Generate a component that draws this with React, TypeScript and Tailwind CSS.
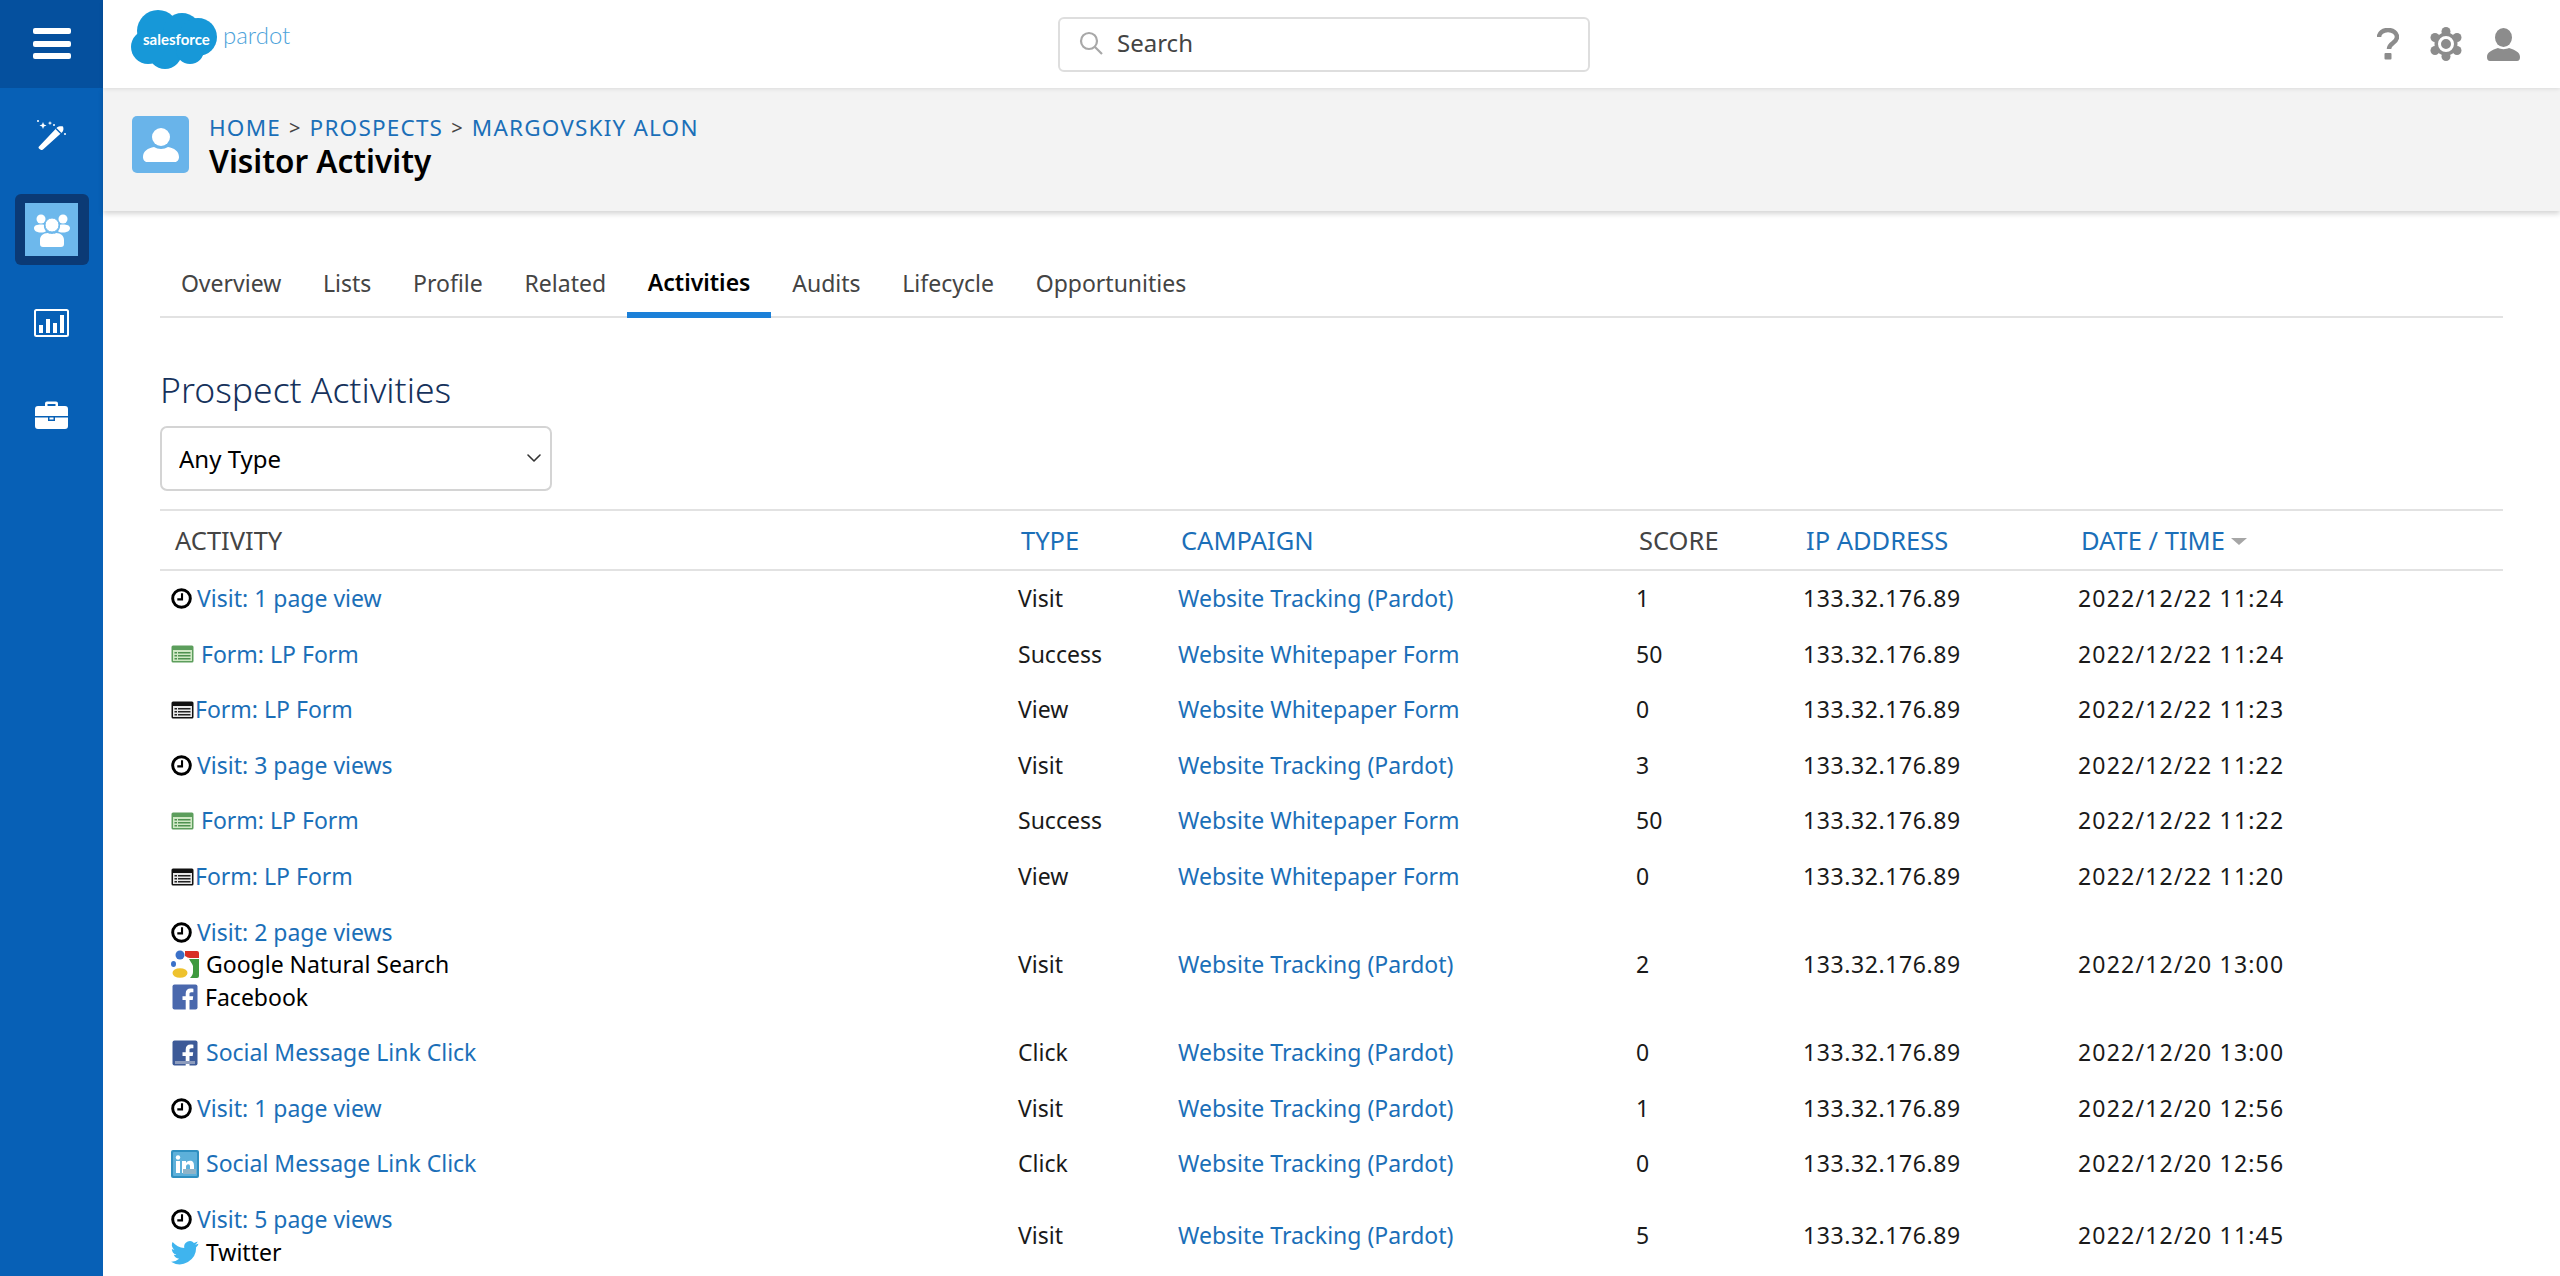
import React from 'react';
import { ChevronDown } from 'lucide-react';

type Icon = 'clock' | 'formGreen' | 'formBlack' | 'social-fb' | 'social-li';

interface Row {
  icon: Icon;
  label: string;
  extras?: { icon: 'google' | 'facebook' | 'twitter'; label: string }[];
  type: string;
  campaign: string;
  score: number;
  date: string;
}

const TRACKING = 'Website Tracking (Pardot)';
const WHITEPAPER = 'Website Whitepaper Form';

const rows: Row[] = [
  { icon: 'clock', label: 'Visit: 1 page view', type: 'Visit', campaign: TRACKING, score: 1, date: '2022/12/22 11:24' },
  { icon: 'formGreen', label: 'Form: LP Form', type: 'Success', campaign: WHITEPAPER, score: 50, date: '2022/12/22 11:24' },
  { icon: 'formBlack', label: 'Form: LP Form', type: 'View', campaign: WHITEPAPER, score: 0, date: '2022/12/22 11:23' },
  { icon: 'clock', label: 'Visit: 3 page views', type: 'Visit', campaign: TRACKING, score: 3, date: '2022/12/22 11:22' },
  { icon: 'formGreen', label: 'Form: LP Form', type: 'Success', campaign: WHITEPAPER, score: 50, date: '2022/12/22 11:22' },
  { icon: 'formBlack', label: 'Form: LP Form', type: 'View', campaign: WHITEPAPER, score: 0, date: '2022/12/22 11:20' },
  {
    icon: 'clock',
    label: 'Visit: 2 page views',
    extras: [
      { icon: 'google', label: 'Google Natural Search' },
      { icon: 'facebook', label: 'Facebook' },
    ],
    type: 'Visit',
    campaign: TRACKING,
    score: 2,
    date: '2022/12/20 13:00',
  },
  { icon: 'social-fb', label: 'Social Message Link Click', type: 'Click', campaign: TRACKING, score: 0, date: '2022/12/20 13:00' },
  { icon: 'clock', label: 'Visit: 1 page view', type: 'Visit', campaign: TRACKING, score: 1, date: '2022/12/20 12:56' },
  { icon: 'social-li', label: 'Social Message Link Click', type: 'Click', campaign: TRACKING, score: 0, date: '2022/12/20 12:56' },
  {
    icon: 'clock',
    label: 'Visit: 5 page views',
    extras: [{ icon: 'twitter', label: 'Twitter' }],
    type: 'Visit',
    campaign: TRACKING,
    score: 5,
    date: '2022/12/20 11:45',
  },
];

const tabs = ['Overview', 'Lists', 'Profile', 'Related', 'Activities', 'Audits', 'Lifecycle', 'Opportunities'];

const COLS = 'grid grid-cols-[858px_160px_458px_167px_275px_1fr]';

const ClockIcon = () => (
  <svg viewBox="0 0 20 20" className="h-[21px] w-[21px] shrink-0">
    <circle cx="10" cy="10" r="8.4" fill="none" stroke="#000" strokeWidth="2.8" />
    <path d="M10.5 5v5.8H6" fill="none" stroke="#000" strokeWidth="2" />
  </svg>
);

const FormIcon = ({ green }: { green?: boolean }) => (
  <svg viewBox="0 0 23 18" className="h-[18px] w-[23px] shrink-0">
    <rect x="0.5" y="0.5" width="22" height="17" rx="1.5" fill={green ? '#5c9e5c' : '#111'} />
    <rect x="2" y="5" width="19" height="11" fill={green ? '#cfe8c4' : '#e8e8e8'} />
    {[7, 10, 13].map((y) => (
      <g key={y}>
        <rect x="3.5" y={y} width="2.5" height="1.5" fill={green ? '#4f9150' : '#222'} />
        <rect x="7" y={y} width="12.5" height="1.5" fill={green ? '#4f9150' : '#222'} />
      </g>
    ))}
  </svg>
);

const FacebookIcon = ({ dark }: { dark?: boolean }) => (
  <svg viewBox="0 0 26 26" className="ml-[1px] h-[26px] w-[26px] shrink-0">
    <rect x="0.5" y="0.5" width="25" height="25" rx="2" fill={dark ? '#3d5a98' : '#4a68ad'} />
    <path d="M17.5 26v-10h3.2l.5-3.8h-3.7V10c0-1.1.4-1.8 1.9-1.8h2V4.8c-.4 0-1.5-.2-2.9-.2-2.9 0-4.8 1.7-4.8 4.9v2.7h-3.2v3.8h3.2v10z" fill="#fff" />
    {dark && <rect x="3" y="21" width="20" height="3" fill="#8d9cbd" />}
  </svg>
);

const LinkedinIcon = () => (
  <svg viewBox="0 0 28 28" className="h-[28px] w-[28px] shrink-0">
    <rect width="28" height="28" rx="2" fill="#2f8fc0" />
    <rect x="2" y="2" width="24" height="24" rx="1" fill="#5db0da" />
    <rect x="5" y="11" width="4" height="12" fill="#fff" />
    <circle cx="7" cy="7.5" r="2.2" fill="#fff" />
    <path d="M11 11h4v2c1-1.5 2.4-2.2 4-2.2 3 0 4 2 4 5V23h-4v-6.5c0-1.5-.6-2.3-1.8-2.3-1.3 0-2.2.9-2.2 2.4V23h-4z" fill="#fff" />
    <rect x="12" y="19" width="13" height="5" fill="#8fb4c8" />
  </svg>
);

const GoogleIcon = () => (
  <svg viewBox="0 0 28 28" className="h-[28px] w-[28px] shrink-0">
    <path d="M14 1h12a2 2 0 0 1 2 2v5h-9c-2 0-3-1-5-2z" fill="#d93025" />
    <path d="M18 9h10v17a2 2 0 0 1-2 2h-7c2-2 3-4 3-6v-6c-1-3-3-5-4-7z" fill="#3f9a3f" />
    <circle cx="9" cy="5" r="4.5" fill="#3a70c8" />
    <ellipse cx="2.5" cy="14" rx="2.5" ry="3" fill="#3a70c8" />
    <ellipse cx="9" cy="23" rx="7.5" ry="4.8" fill="#eec22e" />
  </svg>
);

const TwitterIcon = () => (
  <svg viewBox="0 0 24 24" className="h-[28px] w-[28px] shrink-0">
    <path
      d="M23.5 4.9c-.9.4-1.8.7-2.8.8 1-.6 1.8-1.5 2.1-2.7-.9.6-2 1-3.1 1.2a4.9 4.9 0 0 0-8.3 4.4C7.4 8.4 3.8 6.5 1.4 3.5a4.9 4.9 0 0 0 1.5 6.5c-.8 0-1.5-.2-2.2-.6 0 2.4 1.700 4.400 3.900 4.900-.7.2-1.500.2-2.200.1.6 1.900 2.400 3.300 4.600 3.400A9.900 9.900 0 0 1 0 20.300 14 14 0 0 0 21.500 7.900c1-.7 1.800-1.600 2-3z"
      fill="#3fb4ee"
    />
  </svg>
);

const SmallIcon = ({ icon }: { icon: Icon | 'google' | 'facebook' | 'twitter' }) => {
  switch (icon) {
    case 'clock':
      return <ClockIcon />;
    case 'formGreen':
      return <FormIcon green />;
    case 'formBlack':
      return <FormIcon />;
    case 'social-fb':
      return <FacebookIcon dark />;
    case 'social-li':
      return <LinkedinIcon />;
    case 'google':
      return <GoogleIcon />;
    case 'facebook':
      return <FacebookIcon />;
    default:
      return <TwitterIcon />;
  }
};

const iconGap: Record<Icon, string> = {
  clock: 'gap-[5px]',
  formGreen: 'gap-[7px]',
  formBlack: 'gap-[1px]',
  'social-fb': 'gap-[8px]',
  'social-li': 'gap-[7px]',
};

const Logo = () => (
  <svg viewBox="0 0 160 62" className="h-[62px] w-[160px]">
    <g fill="#1798d8">
      <circle cx="27" cy="22" r="21" />
      <circle cx="51" cy="23" r="19" />
      <circle cx="67" cy="28" r="19" />
      <circle cx="34" cy="43" r="17" />
      <circle cx="17" cy="38" r="17" />
      <circle cx="59" cy="41" r="14" />
    </g>
    <text x="12" y="36" fill="#fff" fontSize="15" fontWeight="700" fontFamily="'Lato', sans-serif">
      salesforce
    </text>
    <text x="92" y="35" fill="#4ca2da" fontSize="24" fontWeight="300" fontFamily="'Lato', sans-serif">
      pardot
    </text>
  </svg>
);

const Sidebar = () => (
  <aside className="flex h-full w-[103px] shrink-0 flex-col items-center bg-[#0760b6]">
    <div className="flex h-[88px] w-full flex-col items-center justify-center gap-[6.5px] bg-[#05509e] pb-[1px]">
      <span className="h-[6px] w-[38px] rounded-[2px] bg-white" />
      <span className="h-[6px] w-[38px] rounded-[2px] bg-white" />
      <span className="h-[6px] w-[38px] rounded-[2px] bg-white" />
    </div>
    <svg viewBox="0 0 30 32" className="mt-[30px] h-[32px] w-[30px]">
      <path d="M2 28.5 20 9.5c1-1 4-1.5 6-1 .8 2 .4 4.5-.6 5.5L6 31.5c-1 1-2.5.5-3.5-.4-1-1-1.4-1.8-.5-2.6z" fill="#fff" />
      <path d="M19 10.5l5 5" stroke="#0760b6" strokeWidth="1.5" />
      <path d="M6 4l1 2.5 2.5 1-2.5 1L6 11 5 8.5l-2.5-1 2.5-1zM13 3l.6 1.5 1.5.6-1.5.6-.6 1.5-.6-1.5-1.5-.6 1.5-.6z" fill="#fff" />
      <circle cx="1" cy="3" r="1" fill="#fff" />
      <circle cx="17" cy="7" r="1" fill="#fff" />
      <circle cx="28" cy="16" r="1" fill="#fff" />
    </svg>
    <div className="mt-[44px] flex h-[71px] w-[74px] items-center justify-center rounded-[6px] bg-[#0b3a75]">
      <div className="flex h-[53px] w-[53px] items-center justify-center bg-[#6db8ec]">
        <svg viewBox="0 0 36 34" className="h-[34px] w-[36px]" fill="#fff">
          <circle cx="7" cy="6" r="4.5" />
          <circle cx="29" cy="6" r="4.5" />
          <path d="M0 15c0-2.5 3-3.5 7-3.5 1 0 2 0 3 .3-.5 3 .8 5 2 6.5-1 .8-2.5 1.2-5 1.2-4 0-7-1.5-7-4.5z" />
          <path d="M36 15c0-2.5-3-3.5-7-3.5-1 0-2 0-3 .3.5 3-.8 5-2 6.5 1 .8 2.5 1.2 5 1.2 4 0 7-1.5 7-4.5z" />
          <circle cx="18" cy="12" r="7" stroke="#6db8ec" strokeWidth="1" />
          <path d="M6 27c0-4 3-7 8-7 1.5 1.2 6.5 1.2 8 0 5 0 8 3 8 7v4a3 3 0 0 1-3 3H9a3 3 0 0 1-3-3z" />
        </svg>
      </div>
    </div>
    <svg viewBox="0 0 35 28" className="mt-[44px] h-[28px] w-[35px]">
      <rect x="1" y="1" width="33" height="26" rx="1.5" fill="none" stroke="#fff" strokeWidth="2" />
      <rect x="5" y="16" width="4" height="8" fill="#fff" />
      <rect x="12" y="10" width="4" height="14" fill="#fff" />
      <rect x="19" y="14" width="4" height="10" fill="#fff" />
      <rect x="26" y="6" width="4" height="18" fill="#fff" />
    </svg>
    <svg viewBox="0 0 33 28" className="mt-[64px] h-[28px] w-[33px]">
      <path d="M10 5V2.5A2 2 0 0 1 12 .5h9a2 2 0 0 1 2 2V5h7a3 3 0 0 1 3 3v7H0V8a3 3 0 0 1 3-3zm2.5 0h8V3h-8z" fill="#fff" fillRule="evenodd" />
      <path d="M0 16.5h13V20h7v-3.5h13V25a3 3 0 0 1-3 3H3a3 3 0 0 1-3-3z" fill="#fff" />
      <rect x="14.5" y="16.5" width="4" height="2" fill="#fff" />
    </svg>
  </aside>
);

const GearIcon = () => (
  <svg viewBox="0 0 32 34" className="h-[34px] w-[32px]" fill="#8c8c8c">
    <circle cx="16" cy="17" r="11.5" />
    <circle cx="16" cy="4.5" r="4.5" />
    <circle cx="16" cy="29.5" r="4.5" />
    <circle cx="5" cy="10.5" r="4.5" />
    <circle cx="27" cy="10.5" r="4.5" />
    <circle cx="5" cy="23.5" r="4.5" />
    <circle cx="27" cy="23.5" r="4.5" />
    <circle cx="16" cy="17" r="6.5" stroke="#fff" strokeWidth="3" />
  </svg>
);

const TopBar = () => (
  <header className="relative z-20 flex h-[88px] shrink-0 items-center bg-white pl-[28px] shadow-[0_1px_4px_rgba(0,0,0,0.1)]">
    <div className="w-[927px] pb-[8px]">
      <Logo />
    </div>
    <div className="flex h-[55px] w-[532px] items-center gap-[14px] rounded-[6px] border-2 border-[#dedede] bg-white pl-[19px] pb-[2px]">
      <svg viewBox="0 0 24 24" className="h-[24px] w-[24px]" fill="none" stroke="#a8a8a8" strokeWidth="2.2">
        <circle cx="10" cy="10" r="8" />
        <path d="M16 16l7 7" />
      </svg>
      <span className="text-[24px] text-[#444]">Search</span>
    </div>
    <div className="ml-auto flex items-center pr-[40px]">
      <svg viewBox="0 0 22 32" className="h-[32px] w-[22px]" fill="none">
        <path d="M2 9c0-4 4-7 9-7s9 3 9 7c0 6-8 6-8 12" stroke="#8c8c8c" strokeWidth="4.5" />
        <rect x="7.5" y="25" width="7" height="6.5" rx="1" fill="#8c8c8c" />
      </svg>
      <div className="ml-[31px] mr-[25px]">
        <GearIcon />
      </div>
      <svg viewBox="0 0 33 33" className="h-[33px] w-[33px]" fill="#8c8c8c">
        <ellipse cx="16.5" cy="9.5" rx="8.5" ry="9.5" />
        <path d="M0 29c0-5 5-7 11-9 3 1.5 8 1.5 11 0 6 2 11 4 11 9 0 2.5-1 4-3 4H3c-2 0-3-1.5-3-4z" />
      </svg>
    </div>
  </header>
);

const Breadcrumbs = () => (
  <section className="relative z-10 flex h-[123px] shrink-0 items-start gap-[20px] bg-[#f3f3f3] pl-[29px] pt-[28px] shadow-[0_3px_5px_rgba(0,0,0,0.16)]">
    <div className="flex h-[57px] w-[57px] items-center justify-center rounded-[5px] bg-[#69b4ea]">
      <svg viewBox="0 0 36 36" className="h-[36px] w-[36px]" fill="#fff">
        <circle cx="18" cy="10" r="9" />
        <path d="M0 30c0-6 5-9 11-10 4 2.5 10 2.5 14 0 6 1 11 4 11 10 0 2.5-1.5 5-4 5H4c-2.5 0-4-2.5-4-5z" />
      </svg>
    </div>
    <div className="-mt-[3px]">
      <div className="flex items-center text-[22.5px] leading-[30px] tracking-[1.2px] text-[#1b6fb8]">
        <span>HOME</span>
        <span className="mx-[8px] text-[20px] text-[#444]">&gt;</span>
        <span>PROSPECTS</span>
        <span className="mx-[8px] text-[20px] text-[#444]">&gt;</span>
        <span>MARGOVSKIY ALON</span>
      </div>
      <h1 className="text-[31.5px] font-semibold leading-[36px] text-black">Visitor Activity</h1>
    </div>
  </section>
);

const Tabs = () => (
  <nav className="flex h-[107px] items-end border-b-2 border-[#e2e2e2]">
    {tabs.map((t) => (
      <div
        key={t}
        className={
          t === 'Activities'
            ? '-mb-[2px] flex h-[65px] items-center border-b-[6px] border-[#1c80d8] px-[20.9px] text-[23px] font-semibold text-black'
            : 'flex h-[63px] items-center px-[20.9px] pb-[3px] text-[23px] text-[#444]'
        }
      >
        {t}
      </div>
    ))}
  </nav>
);

const Filter = () => (
  <div className="relative mt-[12px] h-[65px] w-[392px]">
    <select className="h-full w-full appearance-none rounded-[7px] border-2 border-[#d4d4d4] bg-white pl-[17px] text-[24px] text-black">
      <option>Any Type</option>
    </select>
    <ChevronDown className="pointer-events-none absolute right-[6px] top-[20px] h-[24px] w-[24px] text-[#333]" strokeWidth={1.6} />
  </div>
);

const TableHead = () => {
  const link = 'text-[#1b6fb8]';
  return (
    <div className={`${COLS} mt-[18px] h-[62px] items-center border-y-2 border-[#e2e2e2] text-[25.5px]`}>
      <span className="pl-[15px] text-[#444]">ACTIVITY</span>
      <span className={`pl-[3px] ${link}`}>TYPE</span>
      <span className={`pl-[3px] ${link}`}>CAMPAIGN</span>
      <span className="pl-[3px] text-[#444]">SCORE</span>
      <span className={`pl-[3px] ${link}`}>IP ADDRESS</span>
      <span className={`flex items-center gap-[6px] pl-[3px] ${link}`}>
        DATE / TIME
        <span className="mt-[3px] h-0 w-0 border-x-[8px] border-t-[7px] border-x-transparent border-t-[#a6a6a6]" />
      </span>
    </div>
  );
};

const TableRow = ({ row }: { row: Row }) => (
  <div className={`${COLS} items-center py-[12px] text-[23px] leading-[31.6px] text-[#1a1a1a]`}>
    <div className="pl-[11px]">
      <div className={`flex items-center ${iconGap[row.icon]}`}>
        <SmallIcon icon={row.icon} />
        <span className="text-[#1b6fb8]">{row.label}</span>
      </div>
      {row.extras?.map((e) => (
        <div key={e.label} className="flex items-center gap-[7px] leading-[32.5px] text-black">
          <SmallIcon icon={e.icon} />
          <span>{e.label}</span>
        </div>
      ))}
    </div>
    <span>{row.type}</span>
    <span className="text-[#1b6fb8]">{row.campaign}</span>
    <span>{row.score}</span>
    <span className="tracking-[0.6px]">133.32.176.89</span>
    <span className="tracking-[1.2px]">{row.date}</span>
  </div>
);

export default function App() {
  return (
    <div className="flex h-[1276px] w-[2560px] overflow-hidden bg-white font-['Noto_Sans',sans-serif]">
      <Sidebar />
      <main className="flex min-w-0 flex-1 flex-col">
        <TopBar />
        <Breadcrumbs />
        <div className="px-[57px]">
          <Tabs />
          <h2 className="mt-[46px] text-[35.5px] font-light leading-[50px] text-[#16325c]">Prospect Activities</h2>
          <Filter />
          <TableHead />
          {rows.map((r, i) => (
            <TableRow key={i} row={r} />
          ))}
        </div>
      </main>
    </div>
  );
}
